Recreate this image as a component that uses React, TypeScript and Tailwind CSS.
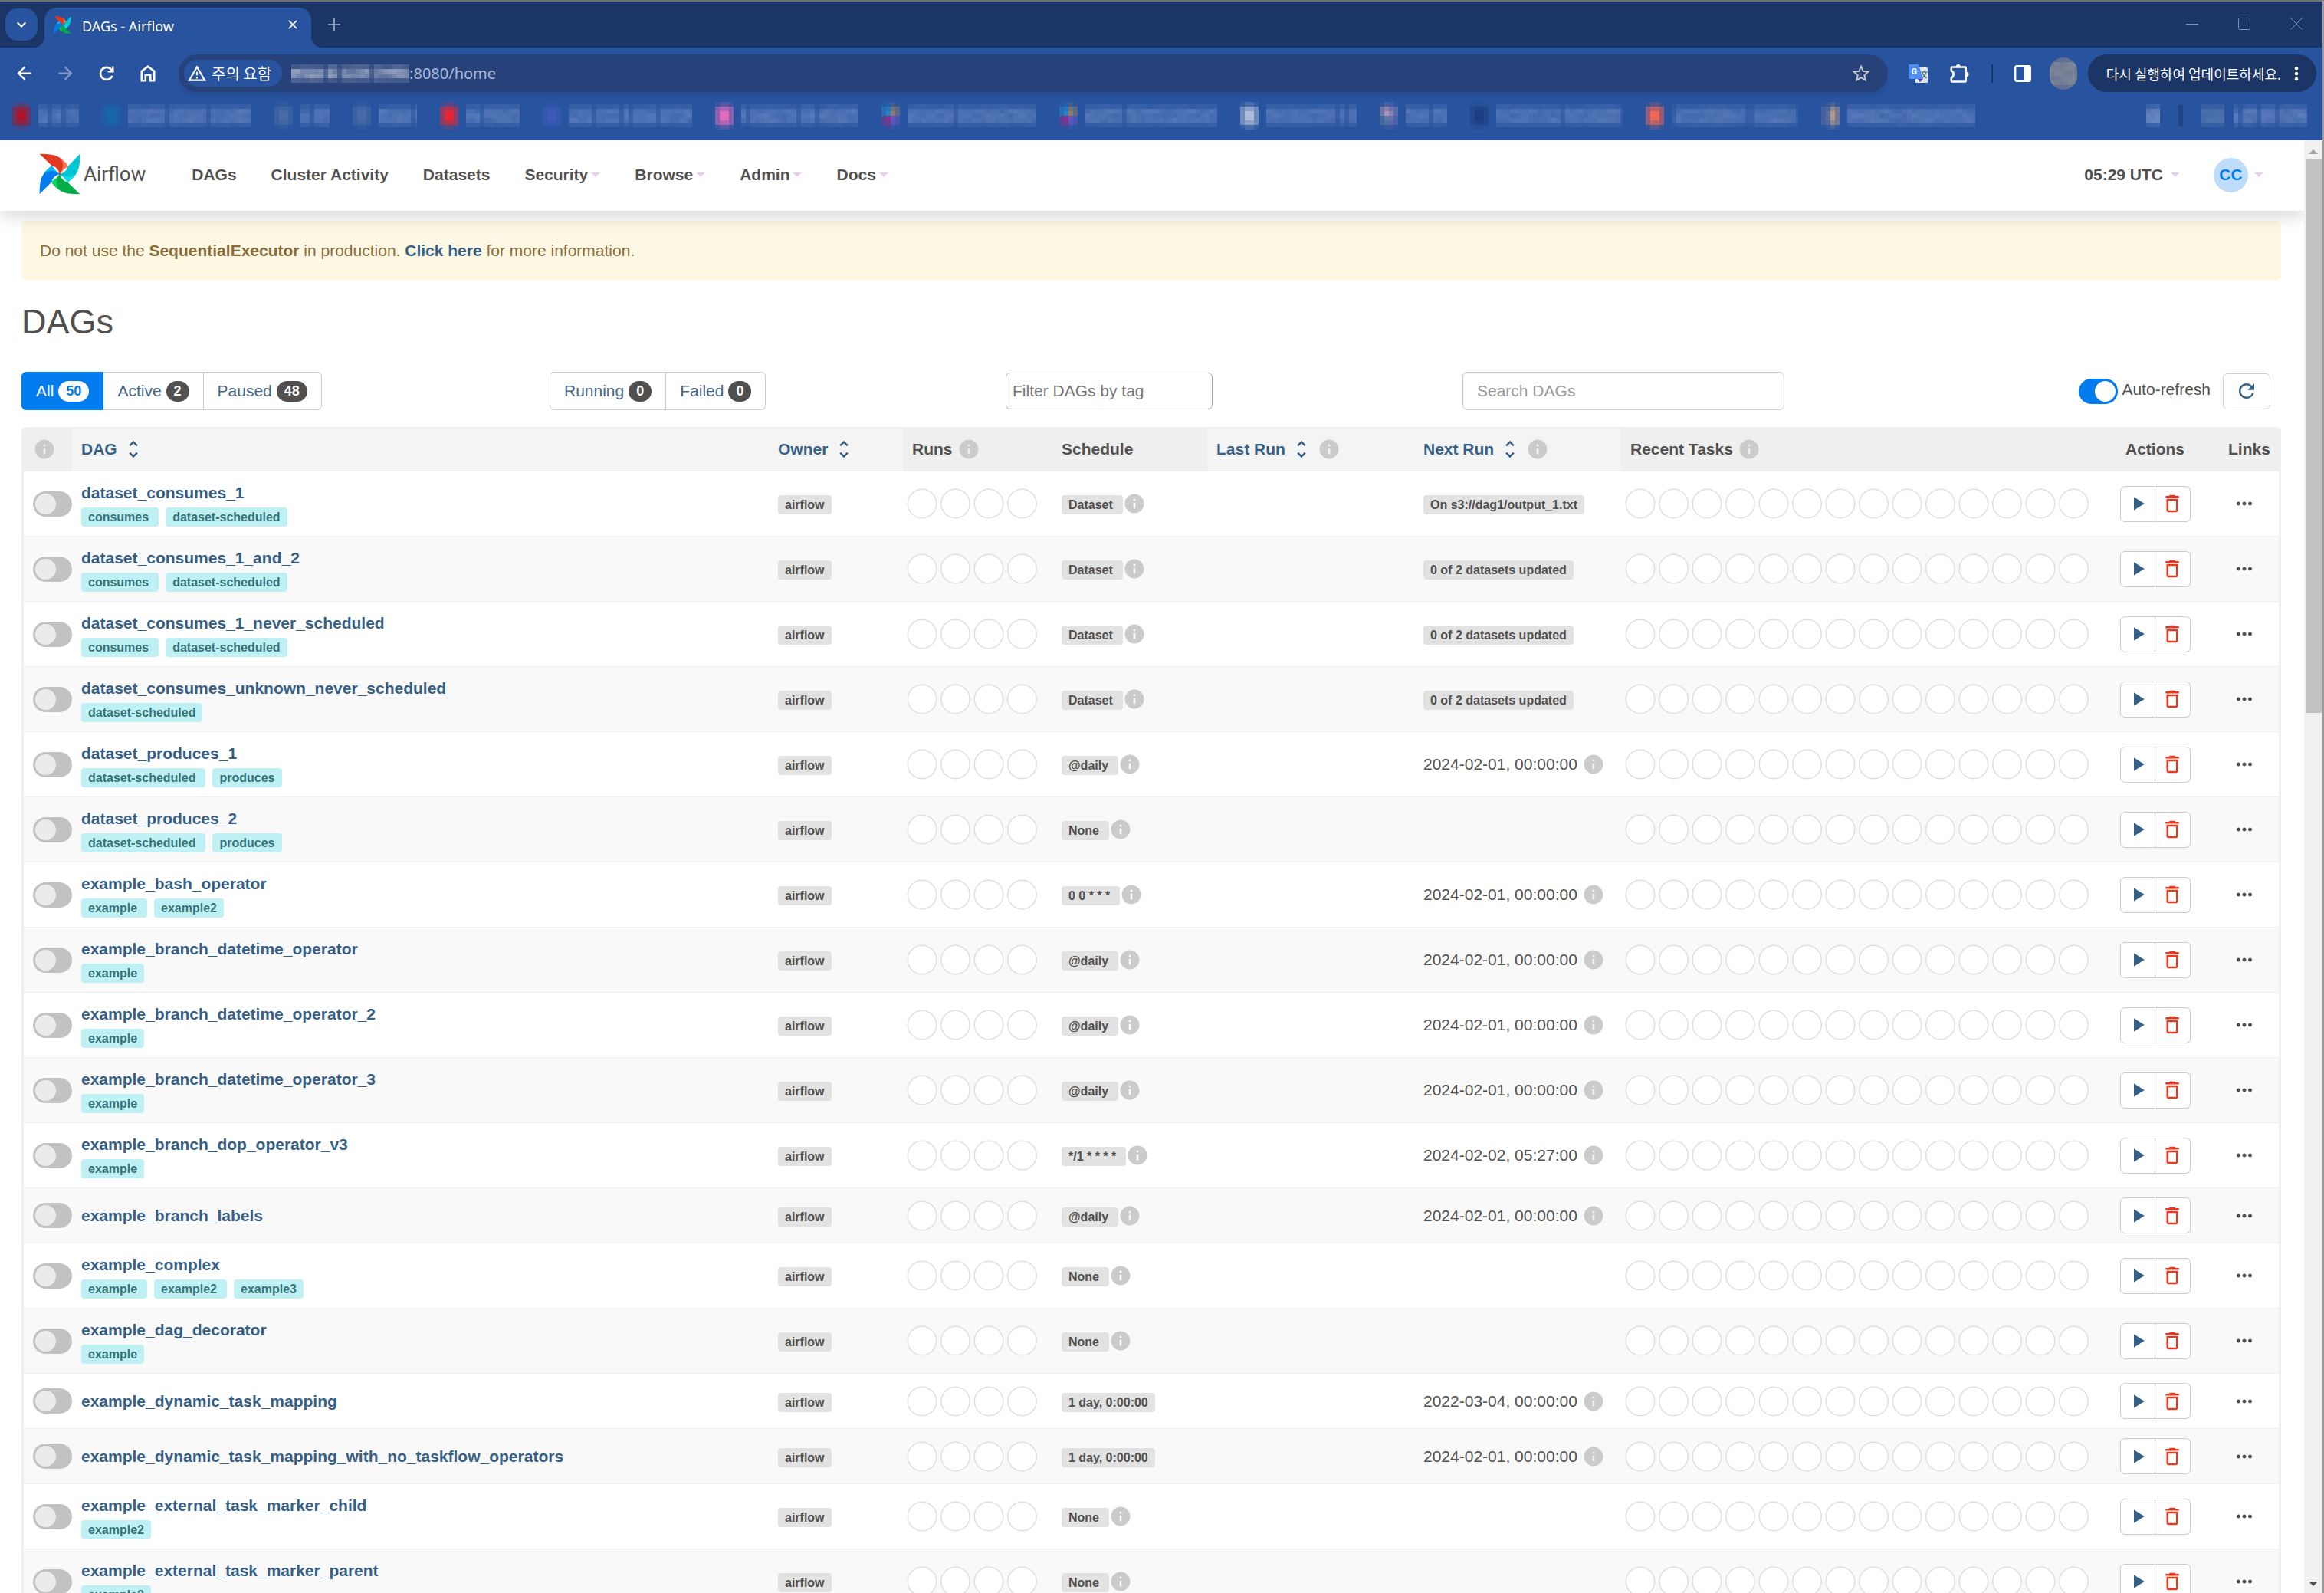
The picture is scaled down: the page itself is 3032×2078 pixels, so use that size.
import React from "react";
import {
  MdArrowBack,
  MdArrowForward,
  MdClose,
  MdDeleteOutline,
  MdInfo,
  MdKeyboardArrowDown,
  MdMoreHoriz,
  MdMoreVert,
  MdOutlineWarningAmber,
  MdPlayArrow,
  MdRefresh,
  MdStarBorder,
  MdUnfoldMore,
} from "react-icons/md";

interface Dag {
  id: string;
  tags: string[];
  schedule: string;
  info?: boolean;
  nextRun?: string;
  nextDataset?: string;
}

const dags: Dag[] = [
  { id: "dataset_consumes_1", tags: ["consumes", "dataset-scheduled"], schedule: "Dataset", info: true, nextDataset: "On s3://dag1/output_1.txt" },
  { id: "dataset_consumes_1_and_2", tags: ["consumes", "dataset-scheduled"], schedule: "Dataset", info: true, nextDataset: "0 of 2 datasets updated" },
  { id: "dataset_consumes_1_never_scheduled", tags: ["consumes", "dataset-scheduled"], schedule: "Dataset", info: true, nextDataset: "0 of 2 datasets updated" },
  { id: "dataset_consumes_unknown_never_scheduled", tags: ["dataset-scheduled"], schedule: "Dataset", info: true, nextDataset: "0 of 2 datasets updated" },
  { id: "dataset_produces_1", tags: ["dataset-scheduled", "produces"], schedule: "@daily", info: true, nextRun: "2024-02-01, 00:00:00" },
  { id: "dataset_produces_2", tags: ["dataset-scheduled", "produces"], schedule: "None", info: true },
  { id: "example_bash_operator", tags: ["example", "example2"], schedule: "0 0 * * *", info: true, nextRun: "2024-02-01, 00:00:00" },
  { id: "example_branch_datetime_operator", tags: ["example"], schedule: "@daily", info: true, nextRun: "2024-02-01, 00:00:00" },
  { id: "example_branch_datetime_operator_2", tags: ["example"], schedule: "@daily", info: true, nextRun: "2024-02-01, 00:00:00" },
  { id: "example_branch_datetime_operator_3", tags: ["example"], schedule: "@daily", info: true, nextRun: "2024-02-01, 00:00:00" },
  { id: "example_branch_dop_operator_v3", tags: ["example"], schedule: "*/1 * * * *", info: true, nextRun: "2024-02-02, 05:27:00" },
  { id: "example_branch_labels", tags: [], schedule: "@daily", info: true, nextRun: "2024-02-01, 00:00:00" },
  { id: "example_complex", tags: ["example", "example2", "example3"], schedule: "None", info: true },
  { id: "example_dag_decorator", tags: ["example"], schedule: "None", info: true },
  { id: "example_dynamic_task_mapping", tags: [], schedule: "1 day, 0:00:00", nextRun: "2022-03-04, 00:00:00" },
  { id: "example_dynamic_task_mapping_with_no_taskflow_operators", tags: [], schedule: "1 day, 0:00:00", nextRun: "2024-02-01, 00:00:00" },
  { id: "example_external_task_marker_child", tags: ["example2"], schedule: "None", info: true },
  { id: "example_external_task_marker_parent", tags: ["example2"], schedule: "None", info: true },
];

const bookmarks = [
  { colors: ["#b3101f"], width: 53 },
  { colors: ["#1467ae"], width: 161 },
  { colors: ["#4a6ca8"], width: 38 },
  { colors: ["#4a6ca8"], width: 50 },
  { colors: ["#f0242c"], width: 70 },
  { colors: ["#3f5abb"], width: 161 },
  { colors: ["#ec6cc0"], width: 153 },
  { colors: ["#2a86c8", "#8f7f6c", "#8c2f88", "#6a55c4"], width: 168 },
  { colors: ["#2a86c8", "#8f7f6c", "#8c2f88", "#6a55c4"], width: 172 },
  { colors: ["#b4c0dc"], width: 118 },
  { colors: ["#b795b4", "#8b7fb8", "#5c7fa0", "#6f6fae"], width: 54 },
  { colors: ["#1b3c7c"], width: 165 },
  { colors: ["#fb6650"], width: 165 },
  { colors: ["#5f6f9e", "#b89c88"], width: 167 },
];

const CELL = 6;

// cheap repeatable noise in 0..1
function noise(x: number, y: number, seed: number) {
  const n = Math.sin(x * 12.9898 + y * 78.233 + seed * 37.719) * 43758.5453;
  return n - Math.floor(n);
}

function Mosaic({ width, rows, seed, color, strength }: { width: number; rows: number; seed: number; color: string; strength: number }) {
  const cols = Math.ceil(width / CELL);
  const cells: React.ReactNode[] = [];
  for (let y = 0; y < rows; y++) {
    for (let x = 0; x < cols; x++) {
      const edge = y === 0 || y === rows - 1 ? 0.4 : 1;
      const space = noise(x, 0, seed) > 0.9 ? 0.4 : 1;
      const level = (noise(x, y + 1, seed) + noise(x + 1, y + 1, seed)) / 2;
      const opacity = (0.5 + level * 0.45) * edge * space * strength;
      cells.push(<rect key={`${x}-${y}`} x={x * CELL} y={y * CELL} width={CELL} height={CELL} fill={color} opacity={opacity} />);
    }
  }
  return (
    <svg width={width} height={rows * CELL} shapeRendering="crispEdges" aria-hidden="true">
      {cells}
    </svg>
  );
}

function MosaicIcon({ colors }: { colors: string[] }) {
  const pick = (x: number, y: number) => colors[((y > 2 ? 2 : 0) + (x > 1 ? 1 : 0)) % colors.length];
  const cells: React.ReactNode[] = [];
  for (let y = 0; y < 6; y++) {
    for (let x = 0; x < 4; x++) {
      const side = x === 0 || x === 3;
      const end = y === 0 || y === 5;
      const opacity = side && end ? 0.08 : end ? 0.22 : side ? 0.5 : y === 1 || y === 4 ? 0.7 : 0.95;
      cells.push(<rect key={`${x}-${y}`} x={x * CELL} y={y * CELL} width={CELL} height={CELL} fill={pick(x, y)} opacity={opacity} />);
    }
  }
  return (
    <svg width="24" height="36" shapeRendering="crispEdges" aria-hidden="true">
      {cells}
    </svg>
  );
}

function Pinwheel({ size }: { size: number }) {
  const blades = [
    { angle: 0, main: "#e43921", light: "#ff7557" },
    { angle: 90, main: "#00c7d4", light: "#11e1ee" },
    { angle: 180, main: "#00ad46", light: "#04d659" },
    { angle: 270, main: "#017cee", light: "#0cb6ff" },
  ];
  return (
    <svg width={size} height={size} viewBox="0 0 162 160" aria-hidden="true">
      {blades.map((b) => (
        <g key={b.angle} transform={`rotate(${b.angle} 81 80)`}>
          <path fill={b.main} d="M2 1C34 1 62 2 85 19C104 36 98 62 81 80C76 64 68 52 50 48Z" />
          <path fill={b.light} d="M85 19C98 28 110 40 115 51C102 56 90 68 81 80C94 62 98 42 85 19Z" />
        </g>
      ))}
      <circle cx="81" cy="80" r="3" fill="#51504f" />
    </svg>
  );
}

function TabStrip() {
  return (
    <div className="flex h-[60px] items-start bg-[#1a3566] pl-[7px] pr-3">
      <button type="button" aria-label="Search tabs" className="mt-[9px] flex h-[42px] w-[42px] items-center justify-center rounded-2xl bg-[#28549f] text-white">
        <MdKeyboardArrowDown size={24} />
      </button>
      <div className="relative ml-[9px] mt-2 flex h-[52px] w-[348px] items-center rounded-t-2xl bg-[#28549f] pl-3 pr-3.5 pb-2">
        <svg width="14" height="14" viewBox="0 0 14 14" className="absolute -left-[14px] bottom-0 text-[#28549f]" aria-hidden="true">
          <path fill="currentColor" d="M14 0V14H0A14 14 0 0 0 14 0Z" />
        </svg>
        <svg width="14" height="14" viewBox="0 0 14 14" className="absolute -right-[14px] bottom-0 text-[#28549f]" aria-hidden="true">
          <path fill="currentColor" d="M0 0V14H14A14 14 0 0 1 0 0Z" />
        </svg>
        <Pinwheel size={23} />
        <span className="ml-3.5 mt-1 flex-1 font-['Noto_Sans'] text-[18px] leading-6 text-white">DAGs - Airflow</span>
        <button type="button" aria-label="Close tab" className="text-white">
          <MdClose size={20} />
        </button>
      </div>
      <button type="button" aria-label="New tab" className="ml-5 flex h-[60px] w-[20px] items-center justify-center text-[#8c9bb8]">
        <svg width="16" height="16" viewBox="0 0 16 16" stroke="currentColor" strokeWidth="2" aria-hidden="true">
          <path d="M8 0V16M0 8H16" />
        </svg>
      </button>
      <div className="ml-auto flex h-[58px] items-center gap-[52px] pr-3.5 text-[#8090b0]">
        <button type="button" aria-label="Minimize">
          <svg width="16" height="16" viewBox="0 0 16 16" stroke="currentColor" aria-hidden="true">
            <path d="M0 8.5H16" />
          </svg>
        </button>
        <button type="button" aria-label="Maximize">
          <svg width="16" height="16" viewBox="0 0 16 16" fill="none" stroke="currentColor" aria-hidden="true">
            <rect x="0.5" y="0.5" width="15" height="15" rx="2" />
          </svg>
        </button>
        <button type="button" aria-label="Close window">
          <svg width="16" height="16" viewBox="0 0 16 16" stroke="currentColor" aria-hidden="true">
            <path d="M0.5 0.5L15.5 15.5M15.5 0.5L0.5 15.5" />
          </svg>
        </button>
      </div>
    </div>
  );
}

function Toolbar() {
  return (
    <div className="flex items-center bg-[#28549f] pb-2 pl-1 pr-2 pt-[9px] text-white">
      <button type="button" aria-label="Back" className="flex w-[54px] justify-center">
        <MdArrowBack size={27} />
      </button>
      <button type="button" aria-label="Forward" className="flex w-[54px] justify-center text-[#8299c6]">
        <MdArrowForward size={27} />
      </button>
      <button type="button" aria-label="Reload" className="flex w-[54px] justify-center">
        <svg width="20" height="20" viewBox="0 0 20 20" fill="none" stroke="currentColor" strokeWidth="2.6" aria-hidden="true">
          <path d="M17.4 13A8 8 0 1 1 16 4.5L18 7" />
          <path d="M18.3 0.5V7.3H11.5" />
        </svg>
      </button>
      <button type="button" aria-label="Home" className="flex w-[54px] justify-center">
        <svg width="20" height="22" viewBox="0 0 20 22" fill="none" stroke="currentColor" strokeWidth="2.6" aria-hidden="true">
          <path d="M1.8 20.2V8L10 1.7L18.2 8V20.2H13.2V12.8H6.8V20.2Z" />
        </svg>
      </button>
      <div className="ml-[13px] flex h-[49px] flex-1 items-center rounded-full bg-[#27427a] pl-[7px] pr-[21px] shadow-[0_8px_4px_-2px_#254d93]">
        <button type="button" className="flex h-[35px] items-center gap-1.5 rounded-full bg-[#28549f] pl-1 pr-3.5 font-['Noto_Sans_CJK_KR',sans-serif] text-[20px] leading-6">
          <MdOutlineWarningAmber size={26} />
          주의 요함
        </button>
        <div className="ml-3 flex flex-1 items-center font-['Noto_Sans'] text-[20px] leading-6 text-[#a9b8d6]">
          <Mosaic width={154} rows={4} seed={4} color="#ccd3e4" strength={0.7} />
          <span>:8080/home</span>
        </div>
        <button type="button" aria-label="Bookmark this page" className="text-[#c8cbd0]">
          <MdStarBorder size={28} />
        </button>
      </div>
      <div className="ml-[27px] flex items-center gap-7">
        <svg width="26" height="26" viewBox="0 0 26 26" aria-hidden="true">
          <rect x="9" y="5" width="16" height="20" rx="1.5" fill="#e2e4e8" />
          <path fill="#4a2fc0" d="M12 20h7l-4 4z" />
          <path fill="#4e8df5" d="M1.500 1H13L19 20H1.500A1.500 1.500 0 0 1 0 18.500V2.500A1.500 1.500 0 0 1 1.500 1Z" />
          <text x="3.500" y="14" fontSize="11" fontWeight="700" fontFamily="Roboto" fill="#fff">G</text>
          <path fill="none" stroke="#5a7f86" strokeWidth="1.400" d="M16.500 11h8M20.500 9v2M23 11c-1 4-3 6-6 8M18 12c1 3 3 5 6 7" />
        </svg>
        <svg width="26" height="26" viewBox="2 0 26 26" fill="none" stroke="#fff" strokeWidth="2.600" strokeLinejoin="round" aria-hidden="true">
          <path d="M5 4.500H21.500Q22.700 4.500 22.700 5.700V22.300Q22.700 23.500 21.500 23.500H5Q3.800 23.500 3.800 22.300V18.600C7.600 17.600 7.600 10.600 3.800 9.600V5.700Q3.800 4.500 5 4.500Z" />
          <path fill="#fff" stroke="none" d="M9.800 4A3 3 0 0 1 15.800 4ZM23.500 10.800A3 3 0 0 1 23.500 17Z" />
        </svg>
        <div className="h-6 w-0.5 bg-[#1a3566]" />
        <svg width="22" height="22" viewBox="0 0 22 22" aria-hidden="true">
          <rect x="1.200" y="1.200" width="19.600" height="19.600" rx="2" fill="none" stroke="#fff" strokeWidth="2.400" />
          <path fill="#fff" d="M13 1H21V21H13Z" />
        </svg>
      </div>
      <div className="ml-6 flex items-center gap-3.5">
        <span className="overflow-hidden rounded-full bg-[#4f6597]">
          <Mosaic width={36} rows={7} seed={9} color="#8d8f96" strength={0.9} />
        </span>
        <button type="button" className="flex h-[49px] items-center gap-1.5 rounded-full bg-[#1a3566] pl-6 pr-3 font-['Noto_Sans_CJK_KR',sans-serif] text-[18px] leading-6">
          다시 실행하여 업데이트하세요.
          <MdMoreVert size={28} />
        </button>
      </div>
    </div>
  );
}

function BookmarkBar() {
  return (
    <div className="flex h-[55px] items-center border-b border-[#4a70b8] bg-[#28549f] pb-2 pl-4 pr-5">
      <div className="flex items-center gap-[30px]">
        {bookmarks.map((b, i) => (
          <a key={i} href="#bookmark" className="flex items-center gap-2.5">
            <MosaicIcon colors={b.colors} />
            <Mosaic width={b.width} rows={5} seed={i + 1} color="#829ad2" strength={0.55} />
          </a>
        ))}
      </div>
      <div className="ml-auto flex items-center gap-6">
        <Mosaic width={18} rows={5} seed={22} color="#8ea4d6" strength={0.8} />
        <div className="h-7 w-1.5 bg-[#1f4488]" />
        <a href="#all-bookmarks" className="flex items-center gap-3">
          <Mosaic width={30} rows={5} seed={24} color="#6f8cb8" strength={0.65} />
          <Mosaic width={96} rows={5} seed={27} color="#829ad2" strength={0.6} />
        </a>
      </div>
    </div>
  );
}

function Caret() {
  return <span className="inline-block border-x-6 border-t-6 border-x-transparent border-t-[#e4d3e8]" />;
}

function Navbar() {
  const links = ["DAGs", "Cluster Activity", "Datasets"];
  const menus = ["Security", "Browse", "Admin", "Docs"];
  return (
    <header className="relative z-10 flex h-[92px] items-center bg-white pb-0.5 pl-[51px] pr-[53px] text-[21px] font-bold leading-[30px] text-[#51504f] shadow-[0_4px_24px_rgba(0,0,0,0.2)]">
      <a href="#home" className="flex items-center gap-1 pb-0.5">
        <Pinwheel size={54} />
        <span className="font-['Roboto'] text-[26px] font-normal">Airflow</span>
      </a>
      <nav className="ml-[60px] flex items-center gap-[45px]">
        {links.map((link) => (
          <a key={link} href={`#${link}`}>{link}</a>
        ))}
        {menus.map((menu) => (
          <button key={menu} type="button" className="flex items-center gap-1">
            {menu}
            <Caret />
          </button>
        ))}
      </nav>
      <div className="ml-auto flex items-center gap-11">
        <button type="button" className="flex items-center gap-2.5">
          05:29 UTC
          <Caret />
        </button>
        <button type="button" className="flex items-center gap-2">
          <span className="flex h-[45px] w-[45px] items-center justify-center rounded-full bg-[#bfddfb] text-[#017cee]">CC</span>
          <Caret />
        </button>
      </div>
    </header>
  );
}

function FilterLink({ label, count, active, edge }: { label: string; count: number; active?: boolean; edge: string }) {
  return (
    <a
      href={`#${label}`}
      className={`flex h-[50px] items-center gap-1.5 border px-[18px] ${edge} ${
        active ? "border-[#017cee] bg-[#017cee] text-white" : "border-[#cbcbcb] bg-white text-[#476685]"
      }`}
    >
      {label}
      <span
        className={`rounded-full px-[10px] text-[18px] font-bold leading-[27px] ${
          active ? "bg-white text-[#017cee]" : "bg-[#51504f] text-white"
        }`}
      >
        {count}
      </span>
    </a>
  );
}

function Filters() {
  return (
    <div className="mt-10 grid grid-cols-[689fr_595fr_596fr_1068fr] items-center leading-[30px]">
      <div className="flex">
        <FilterLink label="All" count={50} active edge="rounded-l-md" />
        <FilterLink label="Active" count={2} edge="border-l-0" />
        <FilterLink label="Paused" count={48} edge="rounded-r-md border-l-0" />
      </div>
      <div className="flex">
        <FilterLink label="Running" count={0} edge="rounded-l-md" />
        <FilterLink label="Failed" count={0} edge="rounded-r-md border-l-0" />
      </div>
      <div>
        <input
          type="text"
          aria-label="Filter DAGs by tag"
          placeholder="Filter DAGs by tag"
          className="block h-12 w-[270px] rounded-md border border-[#aaaaaa] px-2 placeholder:text-[#757575]"
        />
      </div>
      <div className="flex items-center justify-between pr-3.5">
        <input
          type="search"
          aria-label="Search DAGs"
          placeholder="Search DAGs"
          className="block h-[50px] w-[420px] rounded-md border border-[#cccccc] px-[18px] shadow-[inset_0_1px_2px_rgba(0,0,0,0.08)] placeholder:text-[#999999]"
        />
        <div className="flex items-center">
          <label className="flex items-center gap-[5px]">
            <input
              type="checkbox"
              defaultChecked
              className="flex h-[33px] w-[51px] appearance-none items-center justify-end rounded-full bg-[#017cee] px-[3px] before:h-[27px] before:w-[27px] before:rounded-full before:bg-white"
            />
            <span className="pb-1">Auto-refresh</span>
          </label>
          <button type="button" aria-label="Refresh" className="ml-4 flex h-[47px] w-[62px] items-center justify-center rounded-md border border-[#cbcbcb] text-[#365f86]">
            <MdRefresh size={30} />
          </button>
        </div>
      </div>
    </div>
  );
}

function Th({ children, sortable, info, shaded }: { children?: React.ReactNode; sortable?: boolean; info?: boolean; shaded?: boolean }) {
  return (
    <th
      scope="col"
      className={`border-b border-t border-[#efefef] px-3 py-[13px] text-left font-bold ${
        shaded ? "bg-[#efefef]" : "bg-[#f4f4f4]"
      }`}
    >
      <div className="flex items-center gap-1.5">
        {sortable ? (
          <a href="#sort" className="flex items-center gap-1.5 text-[#365f86]">
            {children}
            <MdUnfoldMore size={30} />
          </a>
        ) : (
          children
        )}
        {info && <MdInfo size={30} className="text-[#cbcbcb]" />}
      </div>
    </th>
  );
}

function StatusCircles({ count }: { count: number }) {
  return (
    <svg width={count * 43.5} height="40" className="-ml-1.5 block overflow-visible" aria-hidden="true">
      {Array.from({ length: count }, (_, i) => (
        <circle key={i} cx={19 + i * 43.5} cy="20" r="18.75" fill="#fff" stroke="#dfdfdf" strokeWidth="1.5" />
      ))}
    </svg>
  );
}

function Label({ children, wide }: { children: React.ReactNode; wide?: boolean }) {
  return (
    <span className={`mt-[3px] inline-block whitespace-nowrap rounded bg-[#e2e2e2] pl-[9px] text-[16px] font-bold leading-[25px] text-[#51504f] ${wide ? "pr-[13px]" : "pr-[9px]"}`}>
      {children}
    </span>
  );
}

function DagRow({ dag }: { dag: Dag }) {
  return (
    <tr className="bg-white even:bg-[#f9f9f9] *:border-b *:border-[#efefef]">
      <td className="pl-3">
        <input
          type="checkbox"
          aria-label={`Unpause ${dag.id}`}
          className="flex h-[33px] w-[51px] appearance-none items-center rounded-full bg-[#c3c2c1] px-[3px] before:h-[27px] before:w-[27px] before:rounded-full before:bg-[#ebebeb]"
        />
      </td>
      <td className="px-3 pb-3 pt-[13px]">
        <a href={`#${dag.id}`} className="block font-bold text-[#365f86]">{dag.id}</a>
        {dag.tags.length > 0 && (
          <div className="mt-1 flex gap-[9px]">
            {dag.tags.map((tag, i) => (
              <a
                key={tag}
                href={`#${tag}`}
                className={`rounded bg-[#bff1f4] pl-[9px] text-[16px] font-bold leading-[25px] text-[#367379] ${
                  i < dag.tags.length - 1 ? "pr-[13px]" : "pr-[9px]"
                }`}
              >
                {tag}
              </a>
            ))}
          </div>
        )}
      </td>
      <td className="px-3">
        <Label>airflow</Label>
      </td>
      <td className="px-3">
        <StatusCircles count={4} />
      </td>
      <td className="px-3">
        <div className="flex items-center">
          <Label wide={dag.info}>{dag.schedule}</Label>
          {dag.info && <MdInfo size={30} className="text-[#cbcbcb]" />}
        </div>
      </td>
      <td />
      <td className="px-3">
        {dag.nextDataset && <Label>{dag.nextDataset}</Label>}
        {dag.nextRun && (
          <div className="flex items-center gap-1.5 whitespace-nowrap">
            <time>{dag.nextRun}</time>
            <MdInfo size={30} className="text-[#cbcbcb]" />
          </div>
        )}
      </td>
      <td className="px-3">
        <StatusCircles count={14} />
      </td>
      <td className="px-3 py-3">
        <div className="flex justify-center">
          <button type="button" aria-label={`Trigger ${dag.id}`} className="flex h-[47px] w-[46px] items-center justify-center rounded-l-md border border-[#cbcbcb] bg-white text-[#365f86]">
            <MdPlayArrow size={30} />
          </button>
          <button type="button" aria-label={`Delete ${dag.id}`} className="flex h-[47px] w-[46px] items-center justify-center rounded-r-md border border-l-0 border-[#cbcbcb] bg-white text-[#e43921]">
            <MdDeleteOutline size={30} />
          </button>
        </div>
      </td>
      <td className="pl-3 pr-6">
        <a href={`#links-${dag.id}`} aria-label={`Links for ${dag.id}`} className="flex justify-center">
          <MdMoreHoriz size={30} />
        </a>
      </td>
    </tr>
  );
}

function DagTable() {
  return (
    <div className="mt-[22px] overflow-hidden rounded-t-md border-x-[3px] border-[#efefef]">
      <table className="w-full table-fixed border-separate border-spacing-0 leading-[30px]">
        <colgroup>
          <col className="w-[63px]" />
          <col />
          <col className="w-[175px]" />
          <col className="w-[195px]" />
          <col className="w-[202px]" />
          <col className="w-[270px]" />
          <col className="w-[270px]" />
          <col className="w-[613px]" />
          <col className="w-[167px]" />
          <col className="w-[78px]" />
        </colgroup>
        <thead>
          <tr>
            <Th shaded info />
            <Th sortable>DAG</Th>
            <Th sortable>Owner</Th>
            <Th shaded info>Runs</Th>
            <Th shaded>Schedule</Th>
            <Th sortable info>Last Run</Th>
            <Th sortable info>Next Run</Th>
            <Th shaded info>Recent Tasks</Th>
            <Th shaded>
              <span className="w-full text-center">Actions</span>
            </Th>
            <Th shaded>Links</Th>
          </tr>
        </thead>
        <tbody>
          {dags.map((dag) => (
            <DagRow key={dag.id} dag={dag} />
          ))}
        </tbody>
      </table>
    </div>
  );
}

function Scrollbar() {
  return (
    <div className="flex w-6 flex-col items-center bg-[#f1f1f1]" aria-hidden="true">
      <div className="flex h-[25px] items-center justify-center pt-1">
        <span className="border-x-6 border-b-6 border-x-transparent border-b-[#a3a3a3]" />
      </div>
      <div className="w-[21px] flex-[722] bg-[#c1c1c1]" />
      <div className="flex-[1123]" />
      <div className="flex h-[25px] items-center justify-center">
        <span className="border-x-6 border-t-6 border-x-transparent border-t-[#505050]" />
      </div>
    </div>
  );
}

export default function App() {
  return (
    <div className="flex h-screen flex-col overflow-hidden border-r-2 border-t-2 border-r-[#9a9a9a] border-t-[#6f6f6f] bg-white font-['Liberation_Sans',sans-serif] text-[21px] leading-[30px] text-[#51504f]">
      <TabStrip />
      <Toolbar />
      <BookmarkBar />
      <div className="flex min-h-0 flex-1">
        <div className="min-w-0 flex-1 overflow-hidden">
          <Navbar />
          <main className="pl-7 pr-[30px] pt-[13px]">
            <div className="rounded-md bg-[#fdf7e3] p-6 text-[#8a6d3b]">
              Do not use the <strong>SequentialExecutor</strong> in production.{" "}
              <a href="#docs" className="font-bold text-[#365f86]">Click here</a> for more information.
            </div>
            <h1 className="mt-[29px] text-[45px] leading-[50px]">DAGs</h1>
            <Filters />
            <DagTable />
          </main>
        </div>
        <Scrollbar />
      </div>
    </div>
  );
}
